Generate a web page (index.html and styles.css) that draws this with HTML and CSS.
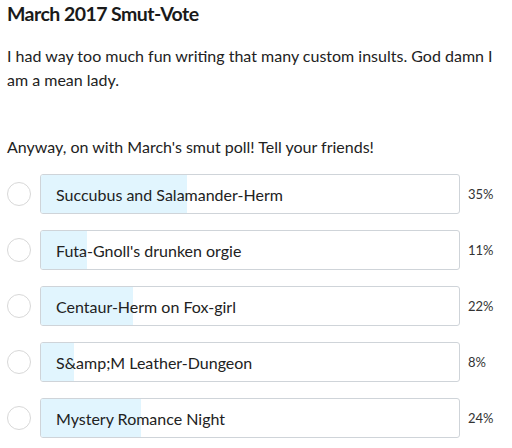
FILE: index.html
```html
<!DOCTYPE html>
<html>
<head>
<meta charset="utf-8">
<link rel="stylesheet" href="styles.css">
</head>
<body>
<div class="page">
  <h1 class="title">March 2017 Smut-Vote</h1>
  <p class="intro">I had way too much fun writing that many custom insults. God damn I am a mean lady.</p>
  <p class="lead">Anyway, on with March's smut poll! Tell your friends!</p>
  <div class="poll">
    <div class="row"><span class="radio"></span><div class="box"><div class="fill" style="width:35%"></div><span class="label">Succubus and Salamander-Herm</span></div><span class="pct">35%</span></div>
    <div class="row"><span class="radio"></span><div class="box"><div class="fill" style="width:11%"></div><span class="label">Futa-Gnoll's drunken orgie</span></div><span class="pct">11%</span></div>
    <div class="row"><span class="radio"></span><div class="box"><div class="fill" style="width:22%"></div><span class="label">Centaur-Herm on Fox-girl</span></div><span class="pct">22%</span></div>
    <div class="row"><span class="radio"></span><div class="box"><div class="fill" style="width:8%"></div><span class="label">S&amp;amp;M Leather-Dungeon</span></div><span class="pct">8%</span></div>
    <div class="row"><span class="radio"></span><div class="box"><div class="fill" style="width:24%"></div><span class="label">Mystery Romance Night</span></div><span class="pct">24%</span></div>
  </div>
</div>
</body>
</html>
```
FILE: styles.css
```css
html, body { margin: 0; padding: 0; background: #fff; }
.page {
  padding: 0 0 0 7px;
  font-family: Lato, "Noto Sans", sans-serif;
  color: #222;
}
.title {
  margin: 0;
  padding-top: 0;
  font-size: 19.5px;
  font-weight: 700;
  line-height: 28px;
  letter-spacing: -0.55px;
  color: #1a1a1a;
}
.intro {
  margin: 16px 0 0 0;
  font-size: 16px;
  line-height: 24px;
  width: 500px;
}
.lead {
  margin: 43px 0 0 0;
  font-size: 16px;
  line-height: 24px;
}
.poll {
  margin-top: 15px;
  display: flex;
  flex-direction: column;
  gap: 16px;
}
.row {
  display: flex;
  align-items: center;
  height: 40px;
}
.radio {
  flex: none;
  width: 22px;
  height: 22px;
  border: 1px solid #d8d8d8;
  border-radius: 50%;
  margin-right: 9px;
  box-sizing: content-box;
}
.box {
  position: relative;
  flex: none;
  width: 418px;
  height: 38px;
  border: 1px solid #cfd4d9;
  border-radius: 3px;
  display: flex;
  align-items: center;
  overflow: hidden;
}
.fill {
  position: absolute;
  left: 0; top: 0; bottom: 0;
  background: #e1f5fe;
}
.label {
  position: relative;
  padding-left: 15px;
  font-size: 16px;
  color: #222;
}
.pct {
  margin-left: 8px;
  font-size: 13px;
  color: #333;
}
```
